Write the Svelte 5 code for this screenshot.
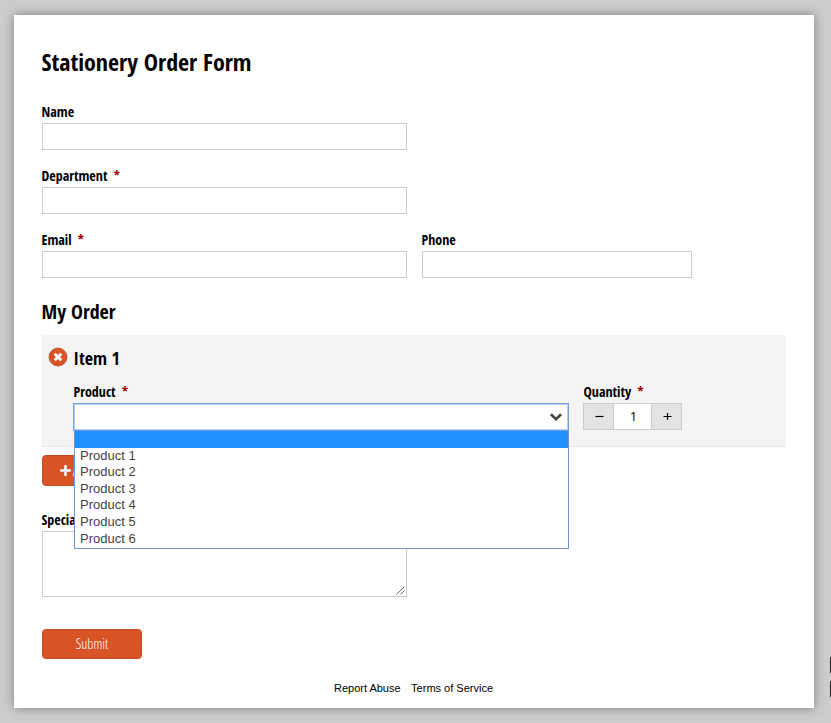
<script>
  const products = ['', 'Product 1', 'Product 2', 'Product 3', 'Product 4', 'Product 5', 'Product 6'];
</script>

{#snippet label(text, required)}
  <div class="label">{text}{#if required}<span class="req">*</span>{/if}</div>
{/snippet}

<div class="page">
  <main class="card">
    <h1>Stationery Order Form</h1>

    <div class="field">{@render label('Name', false)}<div class="input"></div></div>
    <div class="field">{@render label('Department', true)}<div class="input"></div></div>
    <div class="row">
      <div class="field">{@render label('Email', true)}<div class="input"></div></div>
      <div class="field">{@render label('Phone', false)}<div class="input phone"></div></div>
    </div>

    <h2>My Order</h2>

    <section class="item">
      <div class="item-head">
        <svg width="20" height="20" viewBox="0 0 20 20">
          <circle cx="10" cy="10" r="9" fill="#d85427" stroke="#c24a21" stroke-width=".8" />
          <path d="M6.7 6.7l6.6 6.6M13.3 6.7l-6.6 6.6" stroke="#fff" stroke-width="2.9" />
        </svg>
        <h3>Item 1</h3>
      </div>
      <div class="item-fields">
        <div class="product">
          {@render label('Product', true)}
          <div class="select">
            <svg width="14" height="10" viewBox="0 0 14 10">
              <path d="M1.9 2.2L7 7.1l5.1-4.9" fill="none" stroke="#444" stroke-width="2.6" />
            </svg>
          </div>
          <ul class="menu">
            {#each products as p, i}
              <li class:active={i === 0}>{p}</li>
            {/each}
          </ul>
        </div>
        <div>
          {@render label('Quantity', true)}
          <div class="stepper">
            <span class="step"><svg width="9" height="9" viewBox="0 0 9 9"><path d="M.5 4.5h8" stroke="#000" stroke-width="1.2" /></svg></span>
            <span class="count">1</span>
            <span class="step"><svg width="9" height="9" viewBox="0 0 9 9"><path d="M.5 4.5h8M4.5 1v7" stroke="#000" stroke-width="1.2" /></svg></span>
          </div>
        </div>
      </div>
    </section>

    <div class="btn add">
      <svg width="11" height="11" viewBox="0 0 11 11"><path d="M1.2 5.5h8.6M5.5 1.2v8.6" stroke="#fff" stroke-width="2.6" stroke-linecap="round" stroke-linejoin="round" /></svg>
      <span>A</span>
    </div>

    <div class="special">
      {@render label('Specia', false)}
      <div class="textarea">
        <svg width="9" height="9" viewBox="0 0 9 9"><path d="M.5 8.5l8-8M4.5 8.5l4-4" stroke="#555" stroke-width=".9" /></svg>
      </div>
    </div>

    <div class="btn submit">Submit</div>

    <footer><span>Report Abuse</span><span>Terms of Service</span></footer>
  </main>
  <div class="edge"><i></i><i></i></div>
</div>

<style>
  :global(body) { margin: 0; background: #ccc; }
  * { box-sizing: border-box; }
  .page {
    position: relative;
    height: 723px;
    padding: 15px 0 0 14px;
    overflow: hidden;
    background: #ccc;
    font-family: 'Open Sans Condensed', 'Open Sans', sans-serif;
    font-stretch: 75%;
    color: #000;
  }
  .card {
    width: 800px;
    height: 693px;
    padding: 28px 28px 0;
    background: #fff;
    box-shadow: 0 0 10px rgba(0, 0, 0, 0.38);
    display: flex;
    flex-direction: column;
  }
  h1, h2, h3 { margin: 0; font-weight: 700; white-space: nowrap; }
  h1 { height: 59px; margin-left: -0.5px; font-size: 24px; line-height: 37px; }
  h2 { height: 41px; margin-left: -0.5px; font-size: 20px; line-height: 35px; }
  h3 { font-size: 18px; line-height: 26px; }
  .label { height: 21px; margin-left: -0.5px; font-size: 14px; font-weight: 700; line-height: 20px; white-space: nowrap; }
  .req { margin-left: 6px; color: #900; }
  .field { height: 64px; }
  .row { display: flex; gap: 15px; }
  .input { width: 365px; height: 27px; border: 1px solid #ccc; background: #fff; }
  .phone { width: 270px; }
  .item {
    height: 112px;
    padding: 10px 6px 0;
    background: #f4f4f4;
    border-bottom: 1px solid #e6e6e6;
  }
  .item-head { display: flex; gap: 5.5px; height: 37px; }
  .item-head svg { margin-top: 2px; }
  .item-fields { display: flex; gap: 14px; padding-left: 25px; }
  .product { position: relative; width: 496px; }
  .item-fields .label { margin-left: 0.5px; }
  .select {
    display: flex;
    align-items: center;
    justify-content: flex-end;
    width: 496px;
    height: 28px;
    padding-right: 5px;
    border: 1px solid #7d9fd6;
    box-shadow: inset 0 0 0 1px #b5cff8;
    background: #fff;
  }
  .menu {
    position: absolute;
    z-index: 2;
    top: 48px;
    left: 1px;
    width: 495px;
    height: 119px;
    margin: 0;
    padding: 0;
    border: 1px solid #6f95d2;
    background: #fff;
    list-style: none;
    font: 13px/16.6px 'Liberation Sans', Arial, sans-serif;
    color: #444;
  }
  .menu li { height: 16.6px; padding-left: 5px; }
  .menu .active { height: 16.7px; background: #1e90ff; }
  .stepper { display: flex; width: 99px; height: 27px; border: 1px solid #ccc; background: #fff; font: 13px 'Open Sans', sans-serif; }
  .step { display: flex; width: 29px; align-items: center; justify-content: center; background: #e3e3e3; }
  .step svg { margin-left: 1px; }
  .count { flex: 1; padding-left: 2px; border: solid #ccc; border-width: 0 1px; text-align: center; line-height: 25px; }
  .btn {
    display: flex;
    align-items: center;
    justify-content: center;
    width: 100px;
    border: 1px solid #c34b22;
    border-radius: 4px;
    background: #d85427;
    color: #fff;
    font-family: 'Open Sans', sans-serif;
    font-size: 14px;
    font-weight: 340;
    white-space: nowrap;
  }
  .add { height: 31px; margin-top: 8px; justify-content: flex-start; padding-left: 17px; padding-bottom: 1px; gap: 2px; }
  .special { margin-top: 24px; }
  .textarea { display: flex; align-items: flex-end; justify-content: flex-end; width: 365px; height: 66px; padding: 1px; border: 1px solid #ccc; }
  .submit { height: 30px; margin-top: 32px; line-height: 26px; padding-bottom: 1px; }
  footer {
    display: flex;
    justify-content: center;
    gap: 10.5px;
    margin: 22px 1px 0 0;
    font: 11px/14px 'Liberation Sans', Arial, sans-serif;
  }
  .edge { position: absolute; right: 0; top: 657px; display: flex; flex-direction: column; gap: 8px; }
  .edge i { width: 1px; height: 16px; background: #222; }
</style>
